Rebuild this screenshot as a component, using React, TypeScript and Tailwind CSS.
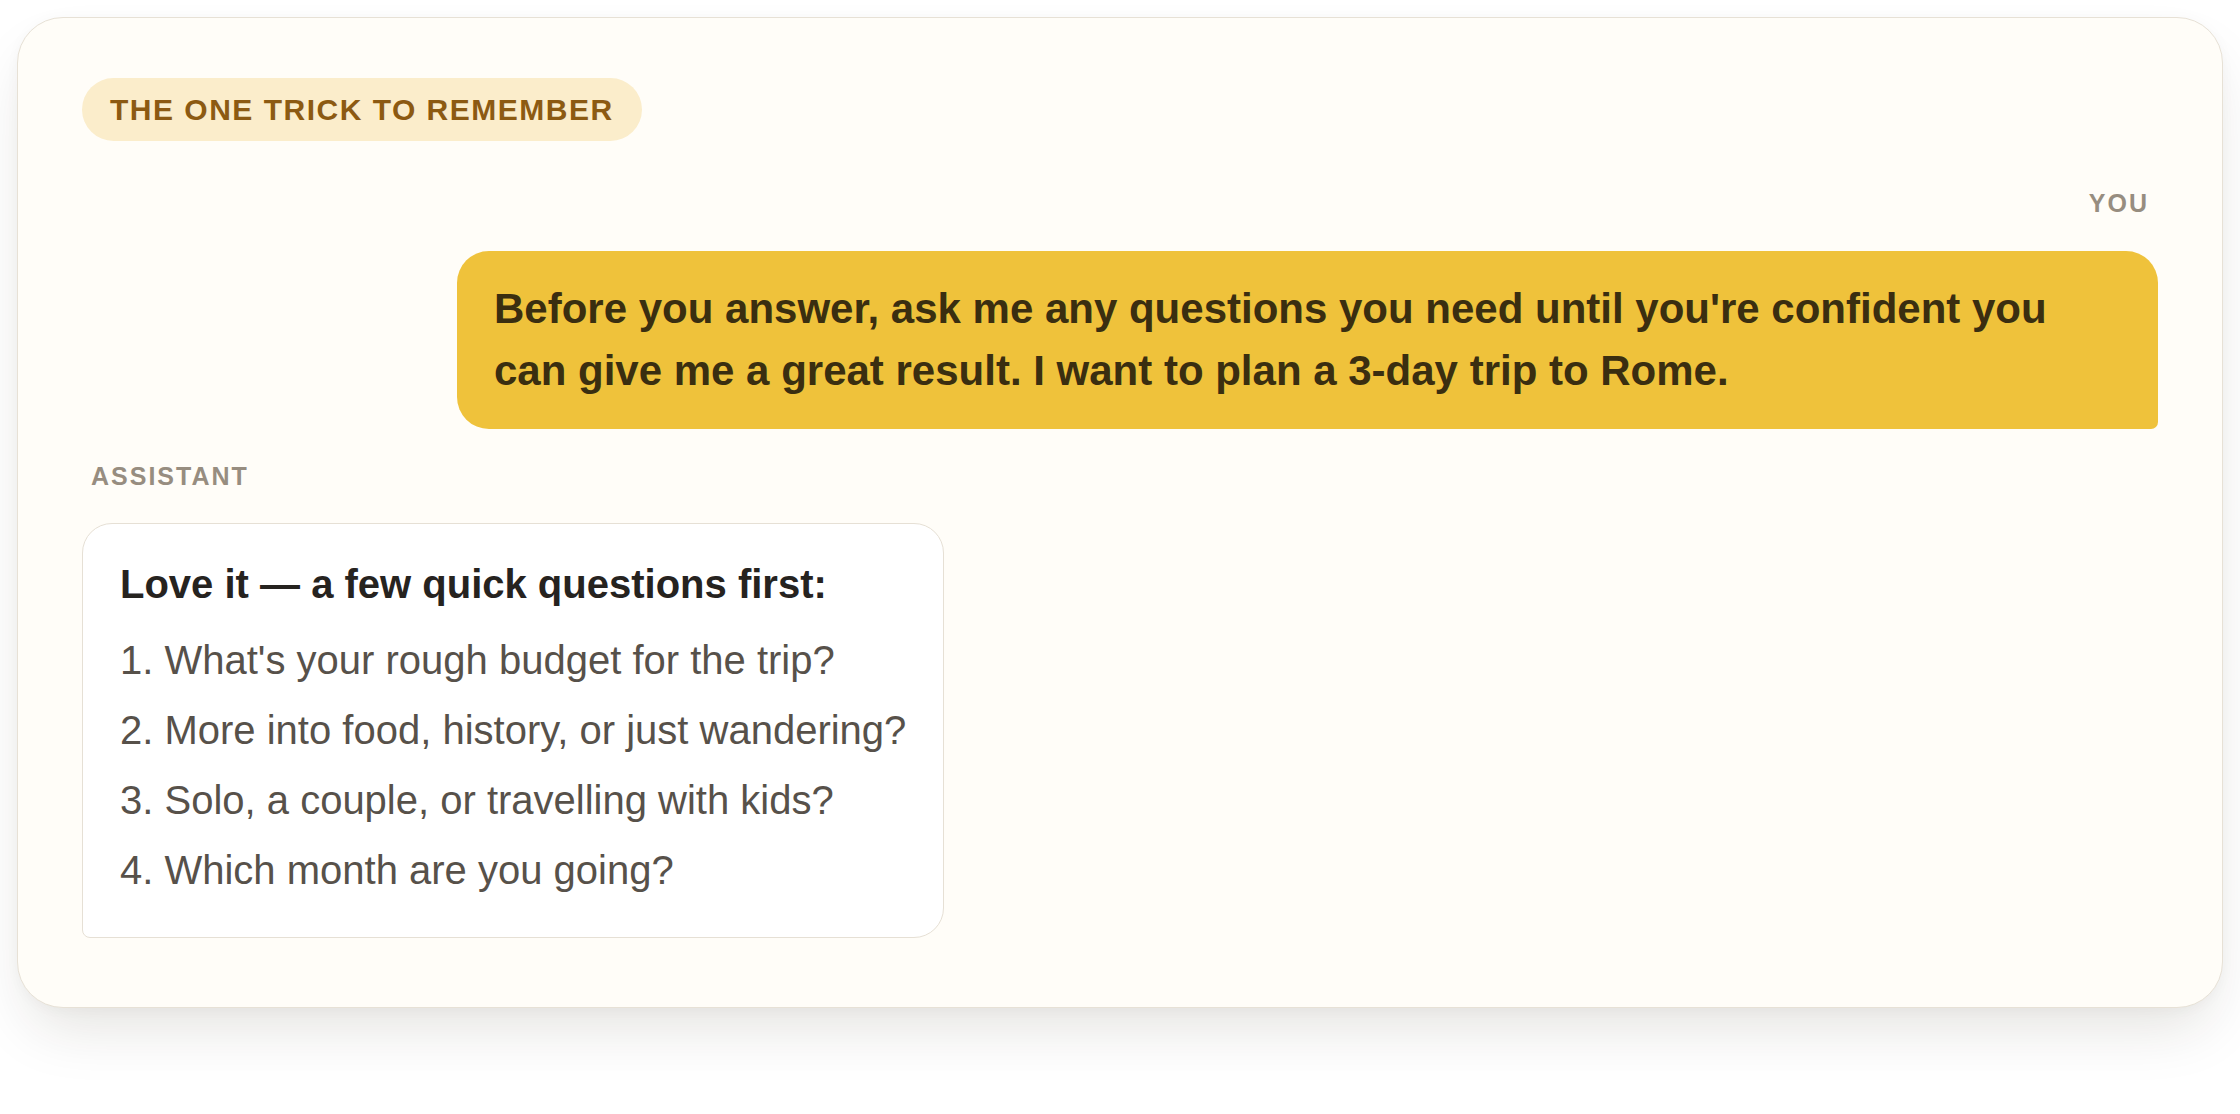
import React from "react";

const questions = [
  "What's your rough budget for the trip?",
  "More into food, history, or just wandering?",
  "Solo, a couple, or travelling with kids?",
  "Which month are you going?",
];

function RoleLabel({ children, align }: { children: React.ReactNode; align: "left" | "right" }) {
  return (
    <div
      className={
        align === "right"
          ? "self-end px-[9px] text-[25px] leading-[30px] font-bold tracking-[0.08em] text-[#978d80]"
          : "self-start px-[9px] text-[25px] leading-[30px] font-bold tracking-[0.08em] text-[#978d80]"
      }
    >
      {children}
    </div>
  );
}

export default function App() {
  return (
    <div className="min-h-screen bg-white p-[17px] font-['Liberation_Sans',Helvetica,Arial,sans-serif]">
      <div className="w-full rounded-[46px] border-[1.5px] border-[#e7e1d6] bg-[#fffdf8] pt-[60px] px-[64px] pb-[69px] shadow-[0_30px_60px_-12px_rgba(40,30,10,0.13),0_2px_14px_rgba(0,0,0,0.03)]">
        <div className="flex flex-col">
          {/* Tip badge */}
          <div className="self-start flex h-[63px] items-center rounded-full bg-[#fbedcb] px-[28px] text-[30px] font-bold tracking-[0.05em] text-[#8c5a12]">
            THE ONE TRICK TO REMEMBER
          </div>

          {/* User message */}
          <div className="mt-[47px] flex flex-col gap-[33px]">
            <RoleLabel align="right">YOU</RoleLabel>
            <div className="w-[1701px] self-end rounded-[32px] rounded-br-[7px] bg-[#efc23b] px-[37px] py-[27px] text-[42px] leading-[62px] font-bold text-[#3a2e10]">
              Before you answer, ask me any questions you need until you're confident you can give me a great
              result. I want to plan a 3-day trip to Rome.
            </div>
          </div>

          {/* Assistant reply */}
          <div className="mt-[32px] flex flex-col gap-[32px]">
            <RoleLabel align="left">ASSISTANT</RoleLabel>
            <div className="self-start rounded-[30px] rounded-bl-[8px] border-[1.5px] border-[#e6e0d5] bg-white px-[37px] pt-[32px] pb-[32px]">
              <div className="text-[40px] leading-[56px] font-bold text-[#26231f]">
                Love it — a few quick questions first:
              </div>
              <ol className="mt-[13px]">
                {questions.map((q, i) => (
                  <li key={i} className="text-[40px] leading-[70px] text-[#57514a] whitespace-nowrap">
                    {i + 1}. {q}
                  </li>
                ))}
              </ol>
            </div>
          </div>
        </div>
      </div>
    </div>
  );
}
